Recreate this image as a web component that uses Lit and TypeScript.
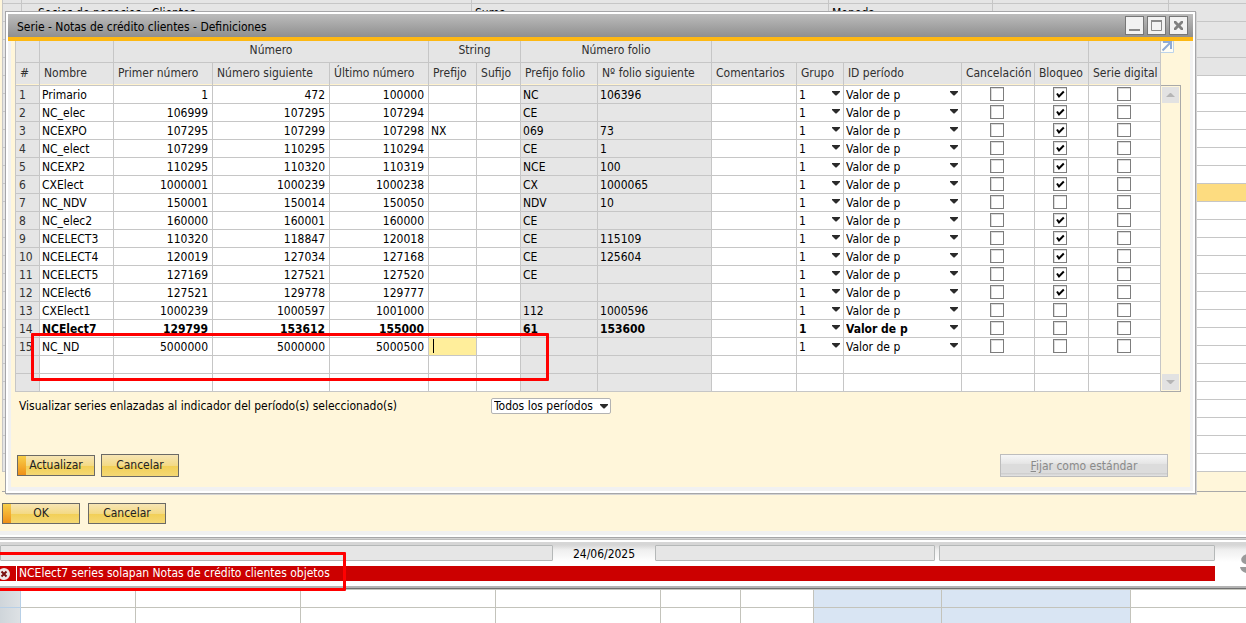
import { LitElement, html, css, nothing } from "lit";
import { customElement } from "lit/decorators.js";
import { classMap } from "lit/directives/class-map.js";

interface Serie {
  n: number;
  nombre: string;
  primero: string;
  siguiente: string;
  ultimo: string;
  prefijo?: string;
  folio?: string;
  folioSig?: string;
  bloqueo?: boolean;
  activa?: boolean;
  edita?: boolean;
}

const SERIES: Serie[] = [
  { n: 1, nombre: "Primario", primero: "1", siguiente: "472", ultimo: "100000", folio: "NC", folioSig: "106396", bloqueo: true },
  { n: 2, nombre: "NC_elec", primero: "106999", siguiente: "107295", ultimo: "107294", folio: "CE", bloqueo: true },
  { n: 3, nombre: "NCEXPO", primero: "107295", siguiente: "107299", ultimo: "107298", prefijo: "NX", folio: "069", folioSig: "73", bloqueo: true },
  { n: 4, nombre: "NC_elect", primero: "107299", siguiente: "110295", ultimo: "110294", folio: "CE", folioSig: "1", bloqueo: true },
  { n: 5, nombre: "NCEXP2", primero: "110295", siguiente: "110320", ultimo: "110319", folio: "NCE", folioSig: "100", bloqueo: true },
  { n: 6, nombre: "CXElect", primero: "1000001", siguiente: "1000239", ultimo: "1000238", folio: "CX", folioSig: "1000065", bloqueo: true },
  { n: 7, nombre: "NC_NDV", primero: "150001", siguiente: "150014", ultimo: "150050", folio: "NDV", folioSig: "10" },
  { n: 8, nombre: "NC_elec2", primero: "160000", siguiente: "160001", ultimo: "160000", folio: "CE", bloqueo: true },
  { n: 9, nombre: "NCELECT3", primero: "110320", siguiente: "118847", ultimo: "120018", folio: "CE", folioSig: "115109", bloqueo: true },
  { n: 10, nombre: "NCELECT4", primero: "120019", siguiente: "127034", ultimo: "127168", folio: "CE", folioSig: "125604", bloqueo: true },
  { n: 11, nombre: "NCELECT5", primero: "127169", siguiente: "127521", ultimo: "127520", folio: "CE", bloqueo: true },
  { n: 12, nombre: "NCElect6", primero: "127521", siguiente: "129778", ultimo: "129777", bloqueo: true },
  { n: 13, nombre: "CXElect1", primero: "1000239", siguiente: "1000597", ultimo: "1001000", folio: "112", folioSig: "1000596" },
  { n: 14, nombre: "NCElect7", primero: "129799", siguiente: "153612", ultimo: "155000", folio: "61", folioSig: "153600", activa: true },
  { n: 15, nombre: "NC_ND", primero: "5000000", siguiente: "5000000", ultimo: "5000500", edita: true },
];

const HEADERS = [
  "#", "Nombre", "Primer número", "Número siguiente", "Último número", "Prefijo", "Sufijo",
  "Prefijo folio", "Nº folio siguiente", "Comentarios", "Grupo", "ID período",
  "Cancelación", "Bloqueo", "Serie digital",
];

const arrow = html`<svg class="arrow" viewBox="0 0 8 5" width="8" height="5" aria-hidden="true"><path d="M0 0H8V1L4.5 4.5H3.5L0 1Z" fill="#2b2b2b" /></svg>`;

const shared = css`
  * { box-sizing: border-box; }
  button, select, input { font: inherit; color: inherit; margin: 0; }
  .btn {
    min-width: 78px; height: 21px; padding: 0 10px; border: 1px solid #6b6a66; border-radius: 0;
    background: linear-gradient(#f7e5b4, #f3da86 50%, #f2cf55 51%, #f4d874);
    color: #222; line-height: 17px;
  }
  .btn.tall { height: 23px; }
  .btn.default {
    background:
      linear-gradient(#f8cf4a, #ef9018) left / 8px 100% no-repeat,
      linear-gradient(#f7e5b4, #f3da86 50%, #f2cf55 51%, #f4d874);
  }
`;

@customElement("series-grid")
export class SeriesGrid extends LitElement {
  static styles = [shared, css`
    :host { display: block; }
    .grid { width: 100%; table-layout: fixed; border-collapse: separate; border-spacing: 0; }
    .c-num { width: 25px; } .c-name { width: 74px; } .c-first { width: 99px; } .c-next { width: 117px; }
    .c-last { width: 99px; } .c-pre { width: 48px; } .c-suf { width: 44px; } .c-fpre { width: 77px; }
    .c-fnext { width: 114px; } .c-group { width: 47px; } .c-period { width: 118px; }
    .c-cancel { width: 73px; } .c-lock { width: 54px; } .c-digital { width: 72px; }
    th, td {
      border: 0 solid #c6c6c6; border-width: 0 1px 1px 0; overflow: hidden; white-space: nowrap;
    }
    th:first-child, td:first-child { border-left-width: 1px; }
    th { height: 22px; padding: 0 0 4px; line-height: 16px; background: #e5e5e5; color: #303030; font-weight: 400; }
    .names th {
      height: 23px; padding: 0 0 2px 4px; text-align: left;
      background: linear-gradient(#e5e5e5, #e5e5e5) top / 100% 21px no-repeat #fff3cf;
    }
    td { height: 18px; padding: 0 4px 0 2px; line-height: 16px; background: #fff; color: #000; }
    td:first-child { padding-left: 3px; color: #333; background: #e5e5e5; }
    .off { background: #e6e6e6; }
    .num { text-align: right; }
    .tick { padding: 1px 2px 0 0; vertical-align: top; }
    .bold td:not(:first-child) { font-weight: 700; }
    .pick { padding: 0 3px 0 0; }
    .combo { display: grid; align-items: center; }
    .combo select, .combo .arrow { grid-area: 1 / 1; }
    .combo select {
      appearance: none; width: 100%; height: 17px; padding: 0 10px 0 2px; border: 0; background: none; line-height: 16px;
    }
    .arrow { display: block; justify-self: end; pointer-events: none; margin-bottom: 2px; }
    .box {
      appearance: none; display: block; width: 14px; height: 14px; margin: 0 auto;
      border: 1px solid #7d7d7d; box-shadow: inset 1px 1px #dcdcdc; background: #fff;
    }
    .box:checked {
      background: #fff url("data:image/svg+xml,%3Csvg xmlns='http://www.w3.org/2000/svg' viewBox='0 0 12 12'%3E%3Cpath d='M3 5.5L5 8.5L9.8 3.5' fill='none' stroke='%23000' stroke-width='2'/%3E%3C/svg%3E") center / 12px 12px no-repeat;
    }
    .field { padding: 0; }
    .cell-input {
      display: block; width: 100%; height: 17px; padding: 0 4px; border: 0; outline: 0;
      background: linear-gradient(#000, #000) 4px 1px / 1px 14px no-repeat #ffee9b;
    }
  `];

  private combo(label: string, value: string) {
    return html`<td class="pick"><span class="combo"><select aria-label=${label}><option>${value}</option></select>${arrow}</span></td>`;
  }

  private tick(label: string, on = false) {
    return html`<td class="tick"><input class="box" type="checkbox" aria-label=${label} .checked=${on} /></td>`;
  }

  private row(s: Serie) {
    return html`<tr class=${classMap({ bold: !!s.activa })}>
      <td>${s.n}</td>
      <td>${s.nombre}</td>
      <td class="num">${s.primero}</td>
      <td class="num">${s.siguiente}</td>
      <td class="num">${s.ultimo}</td>
      ${s.edita
        ? html`<td class="field"><input class="cell-input" type="text" aria-label="Prefijo ${s.nombre}" /></td>`
        : html`<td>${s.prefijo ?? nothing}</td>`}
      <td></td>
      <td class="off">${s.folio ?? nothing}</td>
      <td class="off">${s.folioSig ?? nothing}</td>
      <td></td>
      ${this.combo(`Grupo ${s.nombre}`, "1")}
      ${this.combo(`ID período ${s.nombre}`, "Valor de p")}
      ${this.tick(`Cancelación ${s.nombre}`)}
      ${this.tick(`Bloqueo ${s.nombre}`, s.bloqueo)}
      ${this.tick(`Serie digital ${s.nombre}`)}
    </tr>`;
  }

  render() {
    const blank = html`<tr>${HEADERS.map((_, i) => html`<td class=${classMap({ off: i === 7 || i === 8 })}></td>`)}</tr>`;
    return html`<table class="grid">
      <colgroup>
        <col class="c-num" /><col class="c-name" /><col class="c-first" /><col class="c-next" /><col class="c-last" />
        <col class="c-pre" /><col class="c-suf" /><col class="c-fpre" /><col class="c-fnext" /><col />
        <col class="c-group" /><col class="c-period" /><col class="c-cancel" /><col class="c-lock" /><col class="c-digital" />
      </colgroup>
      <thead>
        <tr>
          <th></th><th></th><th colspan="3">Número</th><th colspan="2">String</th>
          <th colspan="2">Número folio</th><th colspan="5"></th><th></th>
        </tr>
        <tr class="names">${HEADERS.map((h) => html`<th scope="col">${h}</th>`)}</tr>
      </thead>
      <tbody>${SERIES.map((s) => this.row(s))}${blank}${blank}</tbody>
    </table>`;
  }
}

@customElement("series-dialog")
export class SeriesDialog extends LitElement {
  static styles = [shared, css`
    :host { display: block; border: 1px solid #a6a6a8; box-shadow: 1px 1px #d2d2d2; background: #fff; padding: 2px; }
    .title {
      display: flex; align-items: center; gap: 3px; height: 23px; padding: 0 5px 0 9px;
      background: linear-gradient(#bcbcbc, #8f8f8f); color: #000;
    }
    .title h1 { flex: 1; margin: 0; padding-top: 2px; font-size: 12px; font-weight: 400; }
    .tool { display: grid; place-items: center; width: 19px; height: 19px; padding: 0; border: 1px solid #777; background: #f2f2f2; }
    .accent { height: 4px; background: #fdb813; }
    .frame { border: 0 solid #f1f1f1; border-width: 0 3px 4px; background: #fff6da; padding: 0 9px 10px 4px; }
    .sheet { display: flex; align-items: stretch; }
    .sheet series-grid { flex: 1; }
    .rail { display: flex; flex-direction: column; width: 20px; }
    .open { display: block; height: 44px; }
    .open svg { display: block; }
    .scroll {
      flex: 1; display: flex; flex-direction: column; justify-content: space-between;
      border: 1px solid #a9a9a9; border-left: 0; padding: 1px;
    }
    .step { display: grid; place-items: center; height: 16px; width: 17px; padding: 0; border: 0; background: #e2e2e2; }
    .filter { display: flex; align-items: center; padding: 6px 4px 0; }
    .filter label { flex: 0 0 472px; }
    .periods { display: grid; align-items: center; width: 120px; height: 16px; border: 1px solid #b3b3b3; border-radius: 2px; background: #fff; }
    .periods select, .periods svg { grid-area: 1 / 1; }
    .periods select { appearance: none; width: 100%; height: 14px; padding: 0 2px; border: 0; background: none; line-height: 14px; }
    .arrow { justify-self: end; margin-right: 2px; pointer-events: none; }
    .actions { display: flex; align-items: center; gap: 6px; padding: 40px 13px 0 2px; }
    .standard {
      width: 168px; height: 23px; margin-left: auto; border: 1px solid #bdbdbd; color: #8a8a8a;
      background: linear-gradient(#f6f6f6, #e6e6e6 40%, #dcdcdc 45%, #dcdcdc 85%, #cfcfcf 88%, #e4e4e4);
    }
  `];

  render() {
    return html`
      <header class="title">
        <h1>Serie - Notas de crédito clientes - Definiciones</h1>
        <button class="tool" aria-label="Minimizar"><svg width="17" height="17" viewBox="0 0 17 17"><path d="M3 12H14V14H3Z" fill="#8a8a8a" /></svg></button>
        <button class="tool" aria-label="Maximizar"><svg width="17" height="17" viewBox="0 0 17 17"><path d="M3.5 3.5H13.5V13.5H3.5Z" fill="none" stroke="#8a8a8a" /><path d="M3 4H14" stroke="#8a8a8a" stroke-width="2" /></svg></button>
        <button class="tool" aria-label="Cerrar"><svg width="17" height="17" viewBox="0 0 17 17"><path d="M4 4H6L8.5 6.5L11 4H13V6L10.500 8.500L13 11V13H11L8.500 10.500L6 13H4V11L6.500 8.500L4 6Z" fill="#808080" /></svg></button>
      </header>
      <div class="accent"></div>
      <div class="frame">
        <div class="sheet">
          <series-grid></series-grid>
          <div class="rail">
            <a class="open" href="#" aria-label="Ampliar tabla"><svg width="13" height="12" viewBox="0 0 13 12"><path d="M0 0H12.500V11.500H0" fill="#fffdf4" stroke="#bcd3ea" /><path d="M2 1H10V8M9.500 1.500L1.500 9.500" fill="none" stroke="#8fabd6" stroke-width="2" /></svg></a>
            <div class="scroll">
              <button class="step" aria-label="Subir"><svg width="9" height="4" viewBox="0 0 9 4"><path d="M0 4L4 0H5L9 4Z" fill="#b5b5b5" /></svg></button>
              <button class="step" aria-label="Bajar"><svg width="9" height="4" viewBox="0 0 9 4"><path d="M0 0L4 4H5L9 0Z" fill="#b5b5b5" /></svg></button>
            </div>
          </div>
        </div>
        <div class="filter">
          <label for="periods">Visualizar series enlazadas al indicador del período(s) seleccionado(s)</label>
          <span class="periods"><select id="periods"><option>Todos los períodos</option></select>${arrow}</span>
        </div>
        <div class="actions">
          <button class="btn default">Actualizar</button>
          <button class="btn tall">Cancelar</button>
          <button class="standard" disabled><u>F</u>ijar como estándar</button>
        </div>
      </div>`;
  }
}

@customElement("status-bar")
export class StatusBar extends LitElement {
  static styles = [shared, css`
    :host {
      display: grid; grid-template-columns: 1fr 31px; grid-template-rows: 44px 4px; flex: none; overflow: hidden;
      background: linear-gradient(#d6d6d6, #d6d6d6 3px, #efefef 8px, #fff 20px);
    }
    .fields { display: grid; grid-template-columns: 553px 102px 280px 1fr; padding-top: 3px; height: 24px; }
    .slot { height: 16px; border: 1px solid #b5b8b8; border-radius: 1px; background: #e6e6e6; }
    .slot.last { margin-left: 4px; }
    .date { text-align: center; line-height: 18px; }
    .error { display: flex; align-items: center; height: 15px; background: #cc0000; color: #fff; }
    .badge { display: block; width: 16px; height: 15px; }
    .message { border-left: 1px solid #fff; padding-left: 2px; line-height: 15px; }
    .edge { grid-column: 1 / -1; background: linear-gradient(#b4b4b4 2px, #707070 2px 3px, #c5c5bd 3px); }
    .brand { display: block; margin: 11px 0 0 25px; }
  `];

  render() {
    return html`
      <div>
        <div class="fields">
          <div class="slot"></div><time class="date" datetime="2025-06-24">24/06/2025</time><div class="slot"></div><div class="slot last"></div>
        </div>
        <div class="error" role="alert">
          <svg class="badge" viewBox="0 0 16 15" width="16" height="15" aria-hidden="true"><circle cx="4" cy="8" r="6" fill="#eee8e8" /><path d="M1.500 5.500L6.500 10.500M6.500 5.500L1.500 10.500" stroke="#7a1010" stroke-width="2" /></svg>
          <span class="message">NCElect7 series solapan Notas de crédito clientes objetos</span>
        </div>
      </div>
      <svg class="brand" width="18" height="21" viewBox="0 0 18 21" aria-hidden="true"><path d="M17 1Q4 -1 1.500 5Q0 10 7 11.500H17M0 14H6Q7 17 14 17V21Q1 21 0 14" fill="#9a9a9a" /><path d="M17 6H8Q6 8 9 9H17Z" fill="#fff" /></svg>
      <div class="edge"></div>`;
  }
}

@customElement("app-root")
export class AppRoot extends LitElement {
  static styles = [shared, css`
    :host {
      display: flex; flex-direction: column; position: relative; height: 100vh; overflow: hidden; background: #fff;
      font: 12px/16px "DejaVu Sans Condensed", "Noto Sans", sans-serif; color: #000;
    }
    .back { flex: none; background: #fff6da; border-bottom: 4px solid #f1f1f1; padding-left: 2px; }
    .list { width: 100%; table-layout: fixed; border-collapse: separate; border-spacing: 0; border-left: 1px solid #c6c6c6; }
    .list th, .list td { height: 18px; padding: 0 3px; border-bottom: 1px solid #c6c6c6; background: #fff; line-height: 16px; }
    .list th, .list td:first-child { background: #e5e5e5; }
    .list th { text-align: left; font-weight: 400; white-space: nowrap; }
    .list .cut th { height: 4px; line-height: 1px; }
    .list .cut th, .list .named th { border-right: 1px solid #c6c6c6; }
    .list .cut th:last-child, .list .named th:last-child { border-right: 0; }
    .list .named th { padding-left: 16px; }
    .list .named th.near { padding-left: 3px; }
    .list .current td:not(:first-child) { background: #fddc80; }
    .c1 { width: 19px; } .c2 { width: 450px; } .c3 { width: 357px; } .c4 { width: 164px; } .c5 { width: 176px; }
    .total { height: 20px; border-bottom: 1px solid #a9a9a9; }
    .buttons { display: flex; gap: 8px; padding: 11px 0 7px; }
    .rim { flex: none; height: 7px; background: linear-gradient(#fff 2px, #a6a6a8 2px 3px, #d2d2d2 3px 4px, #bcbcbc 4px 5px, #fff 5px); }
    .sheet { display: grid; grid-template-columns: 21px 115px 165px 195px 165px 80px 73px 128px 189px 1fr; grid-auto-rows: 18px; flex: 1; min-height: 0; overflow: hidden; }
    .cell { border: 0 solid #c3c3bb; border-width: 0 1px 1px 0; }
    .cell.end { border-right-width: 0; }
    .cell.head { background: linear-gradient(90deg, #cfd5da, #dde1e4); border-color: #b7cfe6; }
    .cell.mark { background: #d9e5f3; }
    series-dialog { position: absolute; top: 11px; left: 5px; right: 50px; }
    .note { position: absolute; border: 3px solid #ff0000; border-radius: 1px; pointer-events: none; }
    .note.rows { top: 333px; left: 31px; width: 518px; height: 48px; }
    .note.alert { top: 552px; left: -4px; width: 350px; height: 39px; }
  `];

  private sheetCell(i: number) {
    const col = i % 10;
    return html`<div class=${classMap({ cell: true, head: col === 0, mark: col === 7 || col === 8, end: col === 9 })}></div>`;
  }

  render() {
    const cells = (n: number, head = false) =>
      Array.from({ length: n }, () => (head ? html`<th></th>` : html`<td></td>`));
    return html`
      <section class="back">
        <table class="list">
          <colgroup><col class="c1" /><col class="c2" /><col class="c3" /><col class="c4" /><col class="c5" /><col /></colgroup>
          <thead>
            <tr class="cut">${cells(6, true)}</tr>
            <tr class="named"><th></th><th>Socios de negocios - Clientes</th><th class="near">Suma</th><th class="near">Moneda</th><th></th><th></th></tr>
            ${[0, 1, 2].map(() => html`<tr>${cells(6, true)}</tr>`)}
          </thead>
          <tbody>
            ${Array.from({ length: 22 }, (_, i) => html`<tr class=${classMap({ current: i === 6 })}>${cells(6)}</tr>`)}
          </tbody>
        </table>
        <div class="total"></div>
        <div class="buttons"><button class="btn default">OK</button><button class="btn">Cancelar</button></div>
      </section>
      <div class="rim"></div>
      <status-bar></status-bar>
      <section class="sheet">${Array.from({ length: 20 }, (_, i) => this.sheetCell(i))}</section>
      <series-dialog></series-dialog>
      <div class="note rows"></div>
      <div class="note alert"></div>`;
  }
}
